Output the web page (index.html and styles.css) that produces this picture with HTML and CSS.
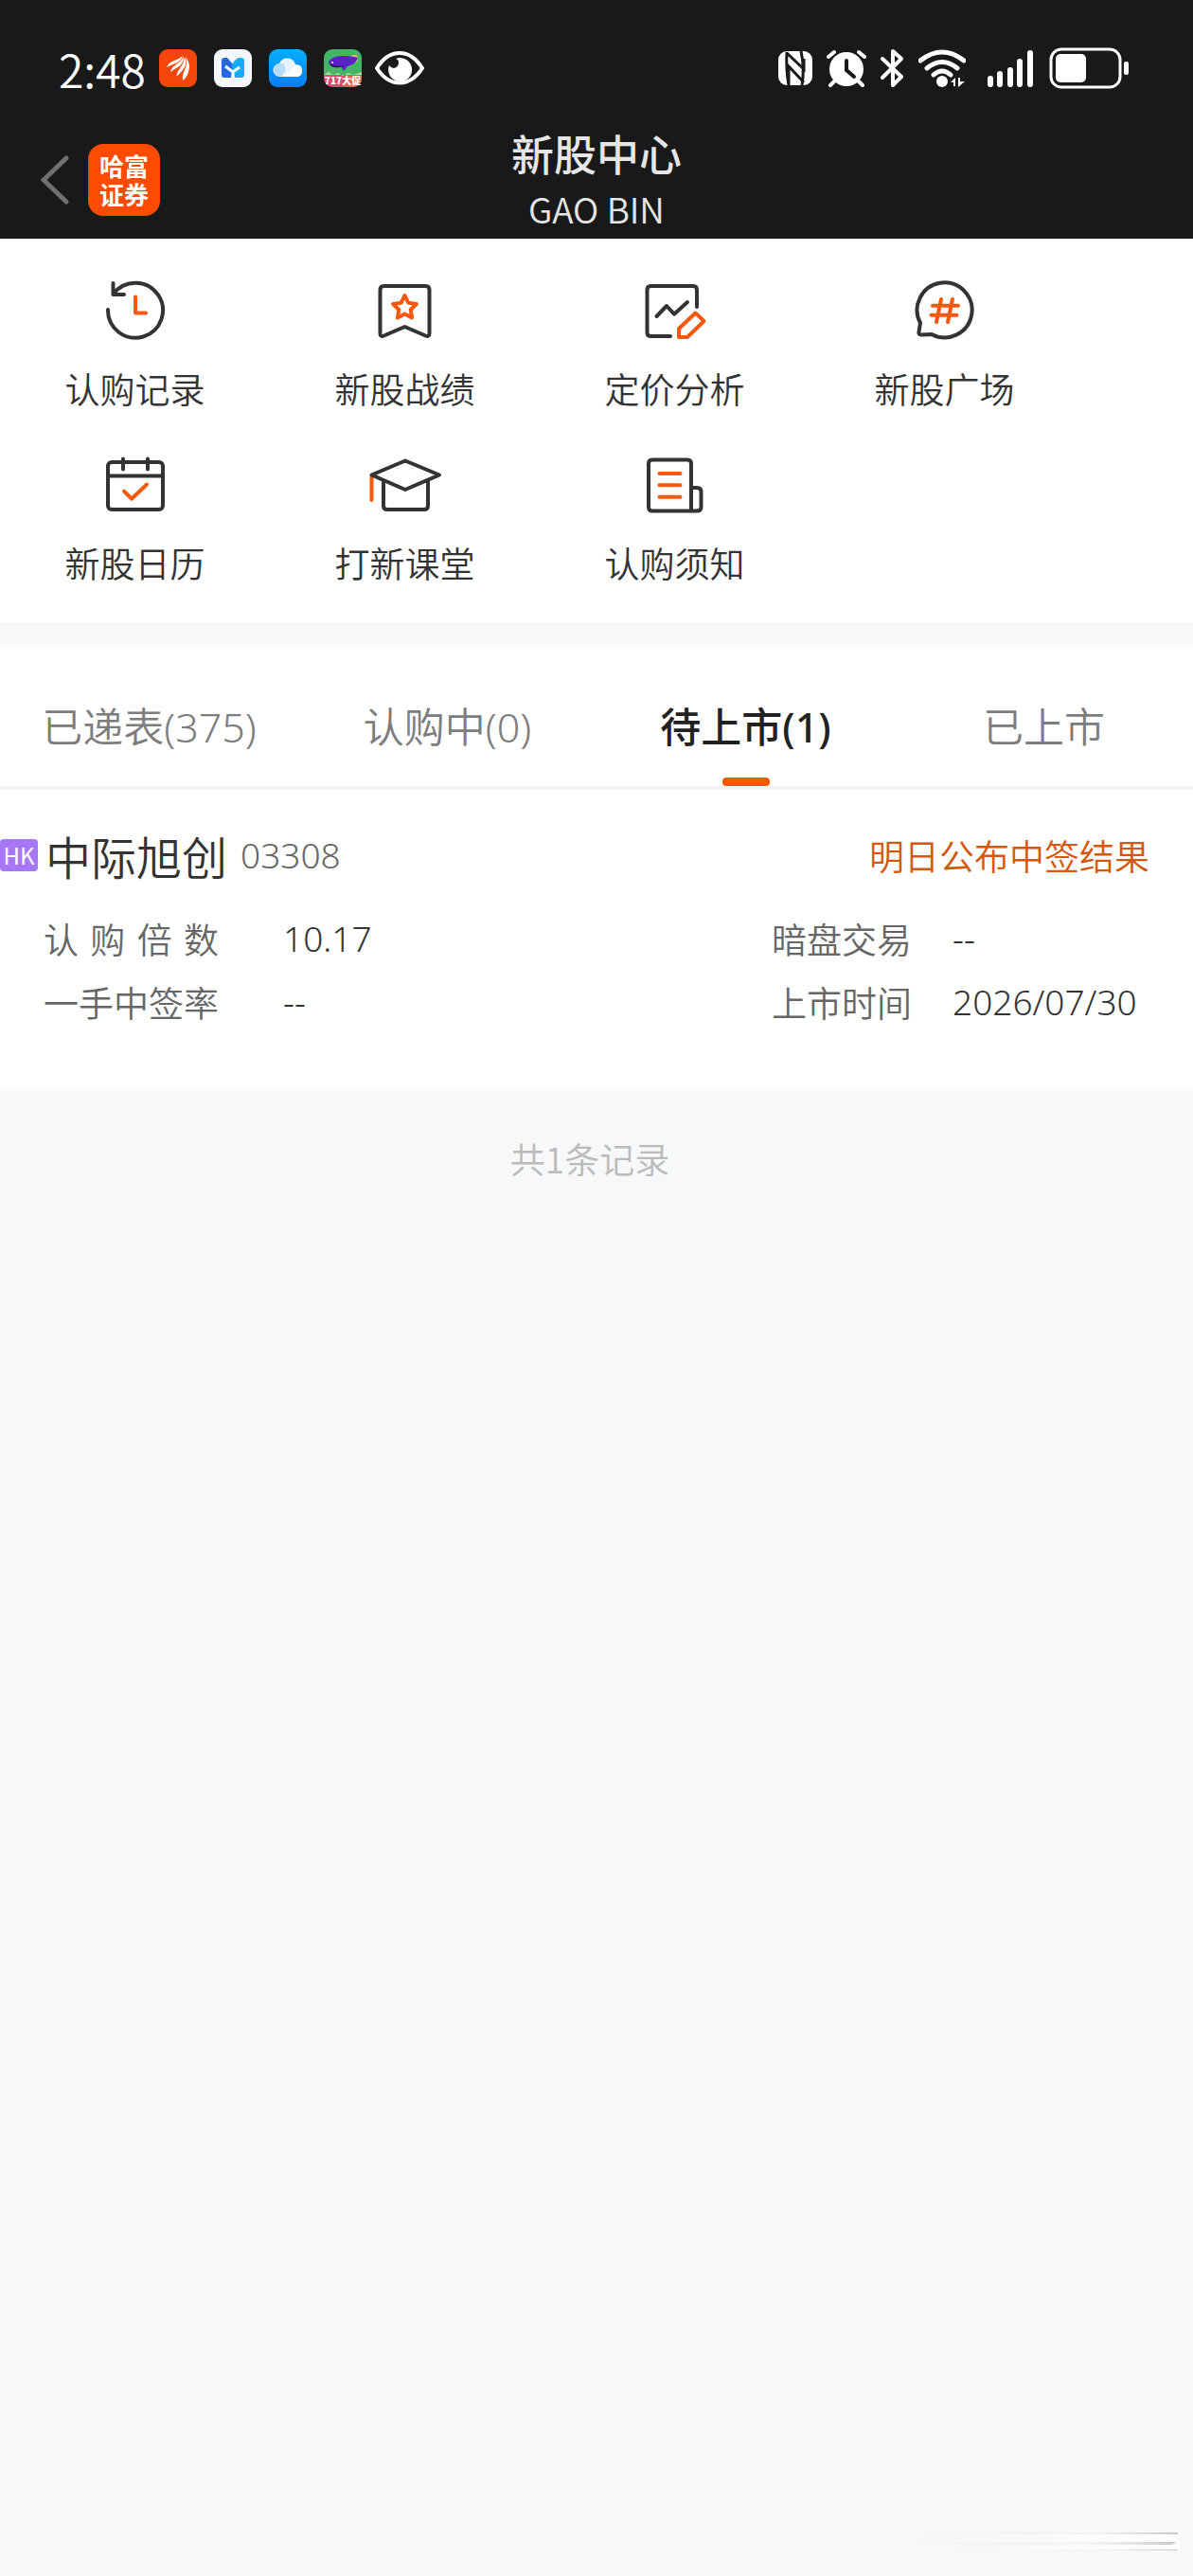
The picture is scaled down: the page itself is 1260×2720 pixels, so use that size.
FILE: index.html
```html
<!DOCTYPE html>
<html lang="zh-CN">
<head>
  <meta charset="UTF-8" />
  <meta name="viewport" content="width=device-width, initial-scale=1.0" />
  <title>新股中心</title>
  <link rel="stylesheet" href="styles.css">
</head>
<body>
  <header class="top">
    <div class="status-bar">
      <div class="status-left">
        <span class="time">2:48</span>
        <div class="apps">
          <svg width="40" height="40" viewBox="0 0 40 40">
            <rect width="40" height="40" rx="9" fill="#f4450a" />
            <g fill="#fff">
              <path d="M8 19q2-5 8-7 6-2 9-5-2 6-8 8-5 2-9 4z" />
              <path d="M12 24q1-5 6-8 5-3 8-8 0 7-6 11-4 2-8 5z" />
              <path d="M18 29q1-5 4-9 4-5 5-12 3 8-2 14-3 4-7 7z" />
              <path d="M25 33q-1-5 2-11 3-6 1-14 6 8 3 16-1 5-6 9z" />
            </g>
          </svg>
          <svg width="40" height="40" viewBox="0 0 40 40">
            <rect width="40" height="40" rx="9" fill="#f4f7fb" />
            <path d="M8 12q0-3 3-3h3l7 8-3 13h-7q-3 0-3-3z" fill="#2468e8" />
            <path d="M32 12q0-3-3-3h-3q-6 3-7 9l3 12h7q3 0 3-3z" fill="#12aef0" />
            <path d="M12 18l8 6 7-5M20 24v7" fill="none" stroke="#fff" stroke-width="3" />
          </svg>
          <svg width="40" height="40" viewBox="0 0 40 40">
            <defs>
              <linearGradient id="sky" x1="0" y1="0" x2="0" y2="1">
                <stop offset="0" stop-color="#05aefb" />
                <stop offset="1" stop-color="#077df5" />
              </linearGradient>
            </defs>
            <rect width="40" height="40" rx="9" fill="url(#sky)" />
            <path d="M12 29a7 7 0 0 1-1-14 9 9 0 0 1 17 1 6.500 6.500 0 0 1 1 13z" fill="#e4f3ff" />
            <path d="M12 29a7 7 0 1 1 4-13q4 7-4 13z" fill="#b8d9f8" />
            <path d="M13 29q9-4 13-11 9-4 9 5 0 6-6 6z" fill="#fff" />
          </svg>
          <svg width="40" height="40" viewBox="0 0 40 40">
            <defs>
              <clipPath id="promoClip"><rect width="40" height="40" rx="9" /></clipPath>
            </defs>
            <g clip-path="url(#promoClip)">
              <rect width="40" height="28" fill="#42b567" />
              <circle cx="32" cy="10" r="4" fill="#f3b660" />
              <rect y="27" width="40" height="13" fill="#d94c70" />
              <path d="M22 28h18v12H22z" fill="#e2654a" />
              <path d="M0 27l5-3 5 3 5-2 5 3 6-3 5 2 9-3v3z" fill="#9fe091" />
              <path d="M5 13C10 6 23 6 36 9c-2 6-7 8-11 9l-4 5-3-5C11 18 6 17 5 13z" fill="#5921c7" />
              <path d="M5 15q8 4 18 2-8 4-15 1z" fill="#261060" />
              <circle cx="9" cy="14" r="1" fill="#fff" />
            </g>
            <text class="promo-text" x="20" y="37">717大促</text>
          </svg>
          <svg class="eye" width="52" height="40" viewBox="0 0 52 40">
            <path d="M2 20Q12 4 26 4t24 16Q40 35.500 26 35.500T2 20z" fill="none" stroke="#fff" stroke-width="4" />
            <path d="M22 10a12.500 12.500 0 1 1-7 7q2 3 5 3 5-1 5-6 0-3-3-4z" fill="#fff" />
          </svg>
        </div>
      </div>
      <div class="status-right">
        <svg class="nfc" width="36" height="40" viewBox="0 0 36 40">
          <rect y="2" width="36" height="36" rx="9" fill="#fff" />
          <path d="M9 3q-1 18 2 35M9 4l18 17V10M11 38V18l16 17M24 2q4 18 1 36" fill="none" stroke="#191919" stroke-width="3" />
        </svg>
        <svg class="alarm" width="42" height="40" viewBox="0 0 42 40">
          <circle cx="21" cy="21" r="18" fill="#fff" />
          <path d="M2 8l6-5M40 8l-6-5M8 34l-4 4M34 34l4 4" stroke="#fff" stroke-width="4" stroke-linecap="round" />
          <path d="M21 12v10l8 7" fill="none" stroke="#191919" stroke-width="4" stroke-linecap="round" />
        </svg>
        <svg class="bluetooth" width="26" height="42" viewBox="0 0 26 42">
          <path d="M3 11l20 19-9 9V3l9 8L3 31" fill="none" stroke="#fff" stroke-width="4" stroke-linecap="round" stroke-linejoin="round" />
        </svg>
        <svg class="wifi" width="50" height="40" viewBox="0 0 50 40">
          <path d="M2 12q23-18 46 0M9 20q16-13 32 0M16 27q9-8 18 0" fill="none" stroke="#fff" stroke-width="5" stroke-linecap="round" />
          <circle cx="25" cy="34" r="6" fill="#fff" />
          <path d="M34 35l5-5v9h-2v-4zM42 30h2v4h5l-7 6z" fill="#fff" />
        </svg>
        <svg class="signal" width="50" height="40" viewBox="0 0 50 40">
          <path d="M4 31v6M14 26v11M25 22v15M35 13v24M46 4v33" stroke="#fff" stroke-width="6" stroke-linecap="round" />
        </svg>
        <svg width="86" height="44" viewBox="0 0 86 44">
          <rect x="2" y="2" width="73" height="40" rx="11" fill="none" stroke="#fff" stroke-width="3" />
          <rect x="7" y="7" width="32" height="30" rx="5" fill="#fff" />
          <rect x="79" y="15" width="5" height="14" rx="2" fill="#fff" />
        </svg>
      </div>
    </div>
    <div class="nav-bar">
      <div class="nav-side">
        <button class="back" type="button" aria-label="返回">
          <svg width="30" height="52" viewBox="0 0 30 52">
            <path d="M27 3L3 26l24 23" fill="none" stroke="#707070" stroke-width="5" stroke-linecap="round" />
          </svg>
        </button>
        <a class="brand" href="#">哈富<br>证券</a>
      </div>
      <div class="nav-title">
        <h1>新股中心</h1>
        <p>GAO BIN</p>
      </div>
      <div class="nav-side"></div>
    </div>
  </header>

  <main>
    <nav class="menu">
      <a class="menu-item" href="#">
        <svg class="icon" viewBox="0 0 80 64">
          <path d="M11 31a29 29 0 1 0 6-17M16.500 3v12H28" />
          <path class="accent" d="M40 17.500v17h11" />
        </svg>
        <span>认购记录</span>
      </a>
      <a class="menu-item" href="#">
        <svg class="icon" viewBox="0 0 80 64">
          <path d="M17.500 6h44q4 0 4 4v46q0 4-4 2.500L39.500 49l-22 9.500q-4 1.500-4-2.500V10q0-4 4-4z" />
          <path class="accent" d="M39.500 16l3.800 7.700 8.600 1.300-6.200 6 1.400 8.500-7.600-4-7.600 4 1.400-8.500-6.200-6 8.600-1.300z" />
        </svg>
        <span>新股战绩</span>
      </a>
      <a class="menu-item" href="#">
        <svg class="icon" viewBox="0 0 80 64">
          <path d="M35 59H14.500q-4 0-4-4V10q0-4 4-4H59q4 0 4 4v18M20.500 38L31 27l8 8.700L53 23" />
          <path class="accent" d="M61.500 34.500l9 8.500L53 60h-9v-9z" />
        </svg>
        <span>定价分析</span>
      </a>
      <a class="menu-item" href="#">
        <svg class="icon" viewBox="0 0 80 64">
          <path d="M14 45a29 29 0 1 1 12 12l-11 .5q-3 0-2.500-3z" />
          <path class="accent" d="M27 26.700h27M25.500 36.700h27M36 20l-5 24M48 20l-5 24" />
        </svg>
        <span>新股广场</span>
      </a>
      <a class="menu-item" href="#">
        <svg class="icon" viewBox="0 0 80 64">
          <rect x="11" y="8" width="58" height="50" rx="4" />
          <path d="M11 22.500h58M27 4.500v11M53 4.500v11" />
          <path class="accent" d="M28 38.700l8 8 16-15.200" />
        </svg>
        <span>新股日历</span>
      </a>
      <a class="menu-item" href="#">
        <svg class="icon" viewBox="0 0 80 64">
          <path class="accent" d="M4.500 24v24" />
          <path d="M40 6.500l36 15L40 37 4.500 21.500zM17 28v26q0 4 4 4h39q4 0 4-4V28" />
        </svg>
        <span>打新课堂</span>
      </a>
      <a class="menu-item" href="#">
        <svg class="icon" viewBox="0 0 80 64">
          <path d="M57 59.500H16q-4 0-4-4v-46q0-4 4-4h37q4 0 4 4zM57 35h6q4.500 0 4.500 4v16.500q0 4-4.500 4h-6" />
          <path class="accent" d="M23.500 20h22M23.500 32.300h22M23.500 44.700h22" />
        </svg>
        <span>认购须知</span>
      </a>
    </nav>

    <div class="tabs" role="tablist">
      <button class="tab" type="button" role="tab">已递表(375)</button>
      <button class="tab" type="button" role="tab">认购中(0)</button>
      <button class="tab active" type="button" role="tab" aria-selected="true">待上市(1)</button>
      <button class="tab" type="button" role="tab">已上市</button>
    </div>

    <section class="stock">
      <div class="stock-head">
        <span class="market">HK</span>
        <h2>中际旭创</h2>
        <span class="code">03308</span>
        <span class="result">明日公布中签结果</span>
      </div>
      <div class="stock-info">
        <dl class="info">
          <dt class="spread">认购倍数</dt>
          <dd>10.17</dd>
          <dt>一手中签率</dt>
          <dd>--</dd>
        </dl>
        <dl class="info info-right">
          <dt>暗盘交易</dt>
          <dd>--</dd>
          <dt>上市时间</dt>
          <dd>2026/07/30</dd>
        </dl>
      </div>
    </section>
    <p class="total">共1条记录</p>
  </main>

  <svg class="swoosh" width="300" height="24" viewBox="0 0 300 24">
    <defs>
      <linearGradient id="fade">
        <stop offset="0" stop-color="#c8c8c8" stop-opacity="0" />
        <stop offset="0.700" stop-color="#d0d0d0" stop-opacity="0.200" />
        <stop offset="1" stop-color="#b8b8b8" stop-opacity="0.800" />
      </linearGradient>
      <linearGradient id="shine">
        <stop offset="0.300" stop-color="#fff" stop-opacity="0" />
        <stop offset="1" stop-color="#fff" />
      </linearGradient>
    </defs>
    <path d="M0 3h292l-1 6-6 5h9v7H0z" fill="url(#shine)" />
    <path d="M0 2h292v2H0zM0 12h290l-4 3H0zM0 20h292v1H0z" fill="url(#fade)" />
  </svg>
</body>
</html>
```
FILE: styles.css
```css
* {
  box-sizing: border-box;
}
body {
  position: relative;
  min-height: 100vh;
  margin: 0;
  background-color: #f7f8fa;
  color: #333;
  font-family: "Noto Sans CJK SC", sans-serif;
  font-size: 37px;
  font-weight: 350;
  line-height: 56px;
}
h1, h2, p, dl, dd {
  margin: 0;
}
a {
  color: inherit;
  text-decoration: none;
}
button {
  padding: 0;
  border: 0;
  background: none;
  font: inherit;
  color: inherit;
}
svg {
  display: block;
}

/* header */
.top {
  background-color: #191919;
  color: #e6e6e6;
}
.status-bar {
  display: flex;
  justify-content: space-between;
  padding: 44px 66px 0 62px;
}
.status-left, .status-right, .apps {
  display: flex;
  align-items: center;
}
.status-left {
  gap: 14px;
}
.time {
  color: #fff;
  font-size: 48px;
}
.apps {
  gap: 18px;
}
.eye {
  margin-left: -4px;
}
.promo-text {
  fill: #fff;
  font-size: 10px;
  font-weight: 900;
  text-anchor: middle;
}
.nfc, .bluetooth {
  margin-right: 15px;
}
.alarm {
  margin-right: 14px;
}
.wifi {
  margin-right: 22px;
}
.signal {
  margin-right: 16px;
}
.nav-bar {
  display: flex;
  align-items: center;
  height: 152px;
  padding: 30px 43px 2px;
}
.nav-side {
  display: flex;
  flex: 1;
  align-items: center;
  gap: 20px;
}
.brand {
  width: 76px;
  height: 76px;
  padding-top: 8px;
  border-radius: 16px;
  background-color: #ff4b00;
  color: #fff;
  font-size: 26px;
  font-weight: 700;
  line-height: 30px;
  text-align: center;
}
.nav-title {
  text-align: center;
}
.nav-title h1 {
  font-size: 45px;
  font-weight: 500;
  line-height: 60px;
}

/* shortcuts */
.menu {
  display: grid;
  grid-template-columns: repeat(4, 1fr);
  padding: 44px 120px 34px 0;
  background-color: #fff;
}
.menu-item {
  display: flex;
  flex-direction: column;
  align-items: center;
  gap: 22px;
  height: 184px;
}
.menu-item:nth-child(n + 5) {
  height: 143px;
}
.icon {
  width: 80px;
  height: 64px;
  fill: none;
  stroke: #333;
  stroke-width: 4;
  stroke-linecap: round;
  stroke-linejoin: round;
}
.accent {
  stroke: #f4590f;
}

/* tabs */
.tabs {
  display: grid;
  grid-template-columns: repeat(4, 1fr);
  margin-top: 24px;
  border-bottom: 4px solid #f4f4f4;
  background-color: #fff;
}
.tab {
  display: flex;
  flex-direction: column;
  align-items: center;
  height: 149px;
  padding-top: 57px;
  color: #7d7d7d;
  font-family: "Noto Sans", "Noto Sans CJK SC", sans-serif;
  font-size: 43px;
  line-height: 60px;
}
.tab.active {
  color: #222;
  font-weight: 500;
}
.tab.active::after {
  content: "";
  width: 50px;
  height: 9px;
  margin-top: 23px;
  border-radius: 4px;
  background-color: #fb5a05;
}

/* stock item */
.stock {
  padding: 39px 46px 65px 0;
  background-color: #fff;
}
.stock-head {
  display: flex;
  align-items: center;
}
.market {
  width: 40px;
  border-radius: 4px;
  background-color: #a877f8;
  color: #fff;
  font-size: 24px;
  font-weight: 400;
  line-height: 34px;
  text-align: center;
}
.stock h2 {
  margin: 0 14px 0 8px;
  font-size: 48px;
  font-weight: 350;
  line-height: 60px;
}
.code, .info dd {
  font-family: "Noto Sans", "Noto Sans CJK SC", sans-serif;
}
.code {
  color: #666;
}
.result {
  margin-left: auto;
  color: #d4580f;
}
.stock-info {
  display: flex;
  justify-content: space-between;
  padding: 30px 0 0 46px;
}
.info {
  display: grid;
  grid-template-columns: 185px auto;
  gap: 11px 68px;
}
.info-right {
  grid-template-columns: 148px 208px;
  column-gap: 43px;
}
.info dt {
  color: #666;
}
.spread {
  text-align-last: justify;
  text-justify: inter-character;
}
.total {
  padding: 44px 14px 0 0;
  color: #bbb;
  text-align: center;
}

.swoosh {
  position: absolute;
  right: 8px;
  bottom: 24px;
}
```
